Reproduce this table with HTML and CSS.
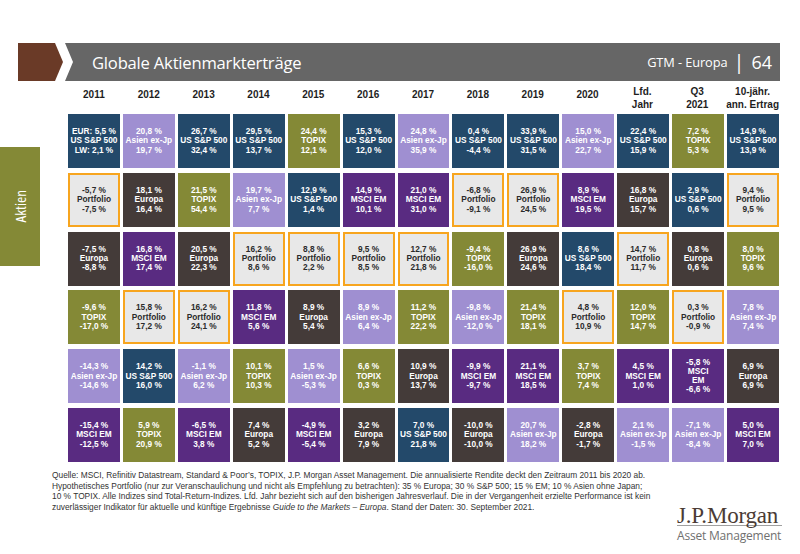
FILE: index.html
```html
<!DOCTYPE html>
<html lang="de">
<head>
<meta charset="utf-8">
<title>Globale Aktienmarkterträge</title>
<link rel="stylesheet" href="styles.css">
</head>
<body>
<div class="slide">
  <div class="topbar">
    <div class="mark"></div>
    <div class="bar">
      <div class="title">Globale Aktienmarkterträge</div>
      <div class="meta"><span class="gtm">GTM - Europa</span><span class="sep">|</span><span class="num">64</span></div>
    </div>
  </div>

  <div class="colheads">
    <div class="yr">2011</div><div class="yr">2012</div><div class="yr">2013</div><div class="yr">2014</div><div class="yr">2015</div><div class="yr">2016</div><div class="yr">2017</div><div class="yr">2018</div><div class="yr">2019</div><div class="yr">2020</div>
    <div>Lfd.<br>Jahr</div><div>Q3<br>2021</div><div>10-jähr.<br>ann. Ertrag</div>
  </div>

  <div class="main">
    <div class="side"><div class="tab"><span>Aktien</span></div></div>
    <div class="grid">
      <!-- row 1 -->
      <div class="cell navy">EUR: 5,5 %<br>US S&amp;P 500<br>LW: 2,1 %</div>
      <div class="cell lav">20,8 %<br>Asien ex-Jp<br>19,7 %</div>
      <div class="cell navy">26,7 %<br>US S&amp;P 500<br>32,4 %</div>
      <div class="cell navy">29,5 %<br>US S&amp;P 500<br>13,7 %</div>
      <div class="cell olive">24,4 %<br>TOPIX<br>12,1 %</div>
      <div class="cell navy">15,3 %<br>US S&amp;P 500<br>12,0 %</div>
      <div class="cell lav">24,8 %<br>Asien ex-Jp<br>35,9 %</div>
      <div class="cell navy">0,4 %<br>US S&amp;P 500<br>-4,4 %</div>
      <div class="cell navy">33,9 %<br>US S&amp;P 500<br>31,5 %</div>
      <div class="cell lav">15,0 %<br>Asien ex-Jp<br>22,7 %</div>
      <div class="cell navy">22,4 %<br>US S&amp;P 500<br>15,9 %</div>
      <div class="cell olive">7,2 %<br>TOPIX<br>5,3 %</div>
      <div class="cell navy">14,9 %<br>US S&amp;P 500<br>13,9 %</div>
      <!-- row 2 -->
      <div class="cell port">-5,7 %<br>Portfolio<br>-7,5 %</div>
      <div class="cell dark">18,1 %<br>Europa<br>16,4 %</div>
      <div class="cell olive">21,5 %<br>TOPIX<br>54,4 %</div>
      <div class="cell lav">19,7 %<br>Asien ex-Jp<br>7,7 %</div>
      <div class="cell navy">12,9 %<br>US S&amp;P 500<br>1,4 %</div>
      <div class="cell purp">14,9 %<br>MSCI EM<br>10,1 %</div>
      <div class="cell purp">21,0 %<br>MSCI EM<br>31,0 %</div>
      <div class="cell port">-6,8 %<br>Portfolio<br>-9,1 %</div>
      <div class="cell port">26,9 %<br>Portfolio<br>24,5 %</div>
      <div class="cell purp">8,9 %<br>MSCI EM<br>19,5 %</div>
      <div class="cell dark">16,8 %<br>Europa<br>15,7 %</div>
      <div class="cell navy">2,9 %<br>US S&amp;P 500<br>0,6 %</div>
      <div class="cell port">9,4 %<br>Portfolio<br>9,5 %</div>
      <!-- row 3 -->
      <div class="cell dark">-7,5 %<br>Europa<br>-8,8 %</div>
      <div class="cell purp">16,8 %<br>MSCI EM<br>17,4 %</div>
      <div class="cell dark">20,5 %<br>Europa<br>22,3 %</div>
      <div class="cell port">16,2 %<br>Portfolio<br>8,6 %</div>
      <div class="cell port">8,8 %<br>Portfolio<br>2,2 %</div>
      <div class="cell port">9,5 %<br>Portfolio<br>8,5 %</div>
      <div class="cell port">12,7 %<br>Portfolio<br>21,8 %</div>
      <div class="cell olive">-9,4 %<br>TOPIX<br>-16,0 %</div>
      <div class="cell dark">26,9 %<br>Europa<br>24,6 %</div>
      <div class="cell navy">8,6 %<br>US S&amp;P 500<br>18,4 %</div>
      <div class="cell port">14,7 %<br>Portfolio<br>11,7 %</div>
      <div class="cell dark">0,8 %<br>Europa<br>0,6 %</div>
      <div class="cell olive">8,0 %<br>TOPIX<br>9,6 %</div>
      <!-- row 4 -->
      <div class="cell olive">-9,6 %<br>TOPIX<br>-17,0 %</div>
      <div class="cell port">15,8 %<br>Portfolio<br>17,2 %</div>
      <div class="cell port">16,2 %<br>Portfolio<br>24,1 %</div>
      <div class="cell purp">11,8 %<br>MSCI EM<br>5,6 %</div>
      <div class="cell dark">8,9 %<br>Europa<br>5,4 %</div>
      <div class="cell lav">8,9 %<br>Asien ex-Jp<br>6,4 %</div>
      <div class="cell olive">11,2 %<br>TOPIX<br>22,2 %</div>
      <div class="cell lav">-9,8 %<br>Asien ex-Jp<br>-12,0 %</div>
      <div class="cell olive">21,4 %<br>TOPIX<br>18,1 %</div>
      <div class="cell port">4,8 %<br>Portfolio<br>10,9 %</div>
      <div class="cell olive">12,0 %<br>TOPIX<br>14,7 %</div>
      <div class="cell port">0,3 %<br>Portfolio<br>-0,9 %</div>
      <div class="cell lav">7,8 %<br>Asien ex-Jp<br>7,4 %</div>
      <!-- row 5 -->
      <div class="cell lav">-14,3 %<br>Asien ex-Jp<br>-14,6 %</div>
      <div class="cell navy">14,2 %<br>US S&amp;P 500<br>16,0 %</div>
      <div class="cell lav">-1,1 %<br>Asien ex-Jp<br>6,2 %</div>
      <div class="cell olive">10,1 %<br>TOPIX<br>10,3 %</div>
      <div class="cell lav">1,5 %<br>Asien ex-Jp<br>-5,3 %</div>
      <div class="cell olive">6,6 %<br>TOPIX<br>0,3 %</div>
      <div class="cell dark">10,9 %<br>Europa<br>13,7 %</div>
      <div class="cell purp">-9,9 %<br>MSCI EM<br>-9,7 %</div>
      <div class="cell purp">21,1 %<br>MSCI EM<br>18,5 %</div>
      <div class="cell olive">3,7 %<br>TOPIX<br>7,4 %</div>
      <div class="cell purp">4,5 %<br>MSCI EM<br>1,0 %</div>
      <div class="cell purp">-5,8 %<br>MSCI<br>EM<br>-6,6 %</div>
      <div class="cell dark">6,9 %<br>Europa<br>6,9 %</div>
      <!-- row 6 -->
      <div class="cell purp">-15,4 %<br>MSCI EM<br>-12,5 %</div>
      <div class="cell olive">5,9 %<br>TOPIX<br>20,9 %</div>
      <div class="cell purp">-6,5 %<br>MSCI EM<br>3,8 %</div>
      <div class="cell dark">7,4 %<br>Europa<br>5,2 %</div>
      <div class="cell purp">-4,9 %<br>MSCI EM<br>-5,4 %</div>
      <div class="cell dark">3,2 %<br>Europa<br>7,9 %</div>
      <div class="cell navy">7,0 %<br>US S&amp;P 500<br>21,8 %</div>
      <div class="cell dark">-10,0 %<br>Europa<br>-10,0 %</div>
      <div class="cell lav">20,7 %<br>Asien ex-Jp<br>18,2 %</div>
      <div class="cell dark">-2,8 %<br>Europa<br>-1,7 %</div>
      <div class="cell lav">2,1 %<br>Asien ex-Jp<br>-1,5 %</div>
      <div class="cell lav">-7,1 %<br>Asien ex-Jp<br>-8,4 %</div>
      <div class="cell purp">5,0 %<br>MSCI EM<br>7,0 %</div>
    </div>
  </div>

  <div class="foot">
    <p class="notes">Quelle: MSCI, Refinitiv Datastream, Standard &amp; Poor’s, TOPIX, J.P. Morgan Asset Management. Die annualisierte Rendite deckt den Zeitraum 2011 bis 2020 ab.<br>Hypothetisches Portfolio (nur zur Veranschaulichung und nicht als Empfehlung zu betrachten): 35 % Europa; 30 % S&amp;P 500; 15 % EM; 10 % Asien ohne Japan;<br>10 % TOPIX. Alle Indizes sind Total-Return-Indizes. Lfd. Jahr bezieht sich auf den bisherigen Jahresverlauf. Die in der Vergangenheit erzielte Performance ist kein<br>zuverlässiger Indikator für aktuelle und künftige Ergebnisse <i>Guide to the Markets – Europa</i>. Stand der Daten: 30. September 2021.</p>
    <div class="logo">
      <div class="jpm">J.P.Morgan</div>
      <div class="am">Asset Management</div>
    </div>
  </div>
</div>
</body>
</html>
```

FILE: styles.css
```css
html, body {
  margin: 0;
  padding: 0;
  background: #ffffff;
}
.slide {
  width: 800px;
  height: 554px;
  overflow: hidden;
  font-family: "Liberation Sans", Arial, sans-serif;
}

/* ---------- top bar ---------- */
.topbar {
  display: flex;
  margin: 43px 0 0 18px;
  width: 762px;
  height: 38px;
}
.mark {
  width: 45px;
  background: #6a3a27;
  clip-path: polygon(0 0, 37px 0, 45px 50%, 37px 100%, 0 100%);
}
.bar {
  flex: 1;
  margin-left: 2px;
  background: #666666;
  clip-path: polygon(0 0, 100% 0, 100% 100%, 0 100%, 8px 50%);
  display: flex;
  align-items: center;
  justify-content: space-between;
  padding: 0 8px 0 27px;
  color: #ffffff;
  font-family: "Open Sans", "DejaVu Sans Condensed", sans-serif;
}
.title {
  font-size: 16.6px;
  letter-spacing: -0.2px;
}
.meta {
  display: flex;
  align-items: center;
}
.gtm {
  font-size: 12.8px;
  letter-spacing: -0.1px;
}
.sep {
  font-size: 20px;
  margin: -2px 7px 0 6px;
}
.num {
  font-size: 18px;
}

/* ---------- column heads ---------- */
.colheads {
  display: grid;
  grid-template-columns: repeat(13, 1fr);
  column-gap: 3px;
  margin-left: 68px;
  width: 711px;
  height: 33px;
  align-items: center;
  text-align: center;
  font-weight: bold;
  font-size: 10px;
  line-height: 13px;
  color: #1e1e1e;
  white-space: nowrap;
}
.yr {
  margin-bottom: 6px;
}

/* ---------- main grid ---------- */
.main {
  display: flex;
}
.side {
  width: 68px;
}
.tab {
  width: 40px;
  height: 119px;
  margin-top: 33px;
  background: #848936;
  display: flex;
  align-items: center;
  justify-content: center;
}
.tab span {
  writing-mode: vertical-rl;
  transform: rotate(180deg);
  color: #ffffff;
  font-family: "Open Sans", "DejaVu Sans Condensed", sans-serif;
  font-stretch: semi-condensed;
  font-size: 15px;
}
.grid {
  width: 711px;
  height: 348px;
  display: grid;
  grid-template-columns: repeat(13, 1fr);
  grid-template-rows: repeat(6, 1fr);
  gap: 4.6px 3px;
}
.cell {
  display: flex;
  flex-direction: column;
  justify-content: center;
  align-items: center;
  text-align: center;
  font-weight: bold;
  font-size: 8.3px;
  line-height: 9.3px;
  color: #ffffff;
  box-sizing: border-box;
}
.navy { background: #23496a; }
.lav { background: #9f8fd1; }
.olive { background: #848936; }
.dark { background: #443b39; }
.purp { background: #592b81; }
.port {
  background: #e8e8e8;
  border: 2px solid #f7a51f;
  color: #2b2b2b;
}

/* ---------- footer ---------- */
.foot {
  display: flex;
  margin-top: 8px;
  padding-left: 52px;
}
.notes {
  flex: none;
  width: 600px;
  margin: 0;
  font-size: 8.35px;
  line-height: 10.6px;
  color: #333333;
  white-space: nowrap;
}
.logo {
  flex: none;
  width: 105px;
  margin: 37px 18px 0 auto;
  display: flex;
  flex-direction: column;
  align-items: stretch;
}
.jpm {
  font-family: "Liberation Serif", "Times New Roman", serif;
  font-size: 23px;
  line-height: 18px;
  color: #4b3c35;
  letter-spacing: -0.2px;
  white-space: nowrap;
  border-bottom: 1px solid #a0a0a0;
}
.am {
  margin-top: 3px;
  font-family: "Open Sans", "DejaVu Sans Condensed", sans-serif;
  font-size: 12px;
  line-height: 14px;
  color: #707070;
  white-space: nowrap;
  letter-spacing: -0.2px;
}
```
